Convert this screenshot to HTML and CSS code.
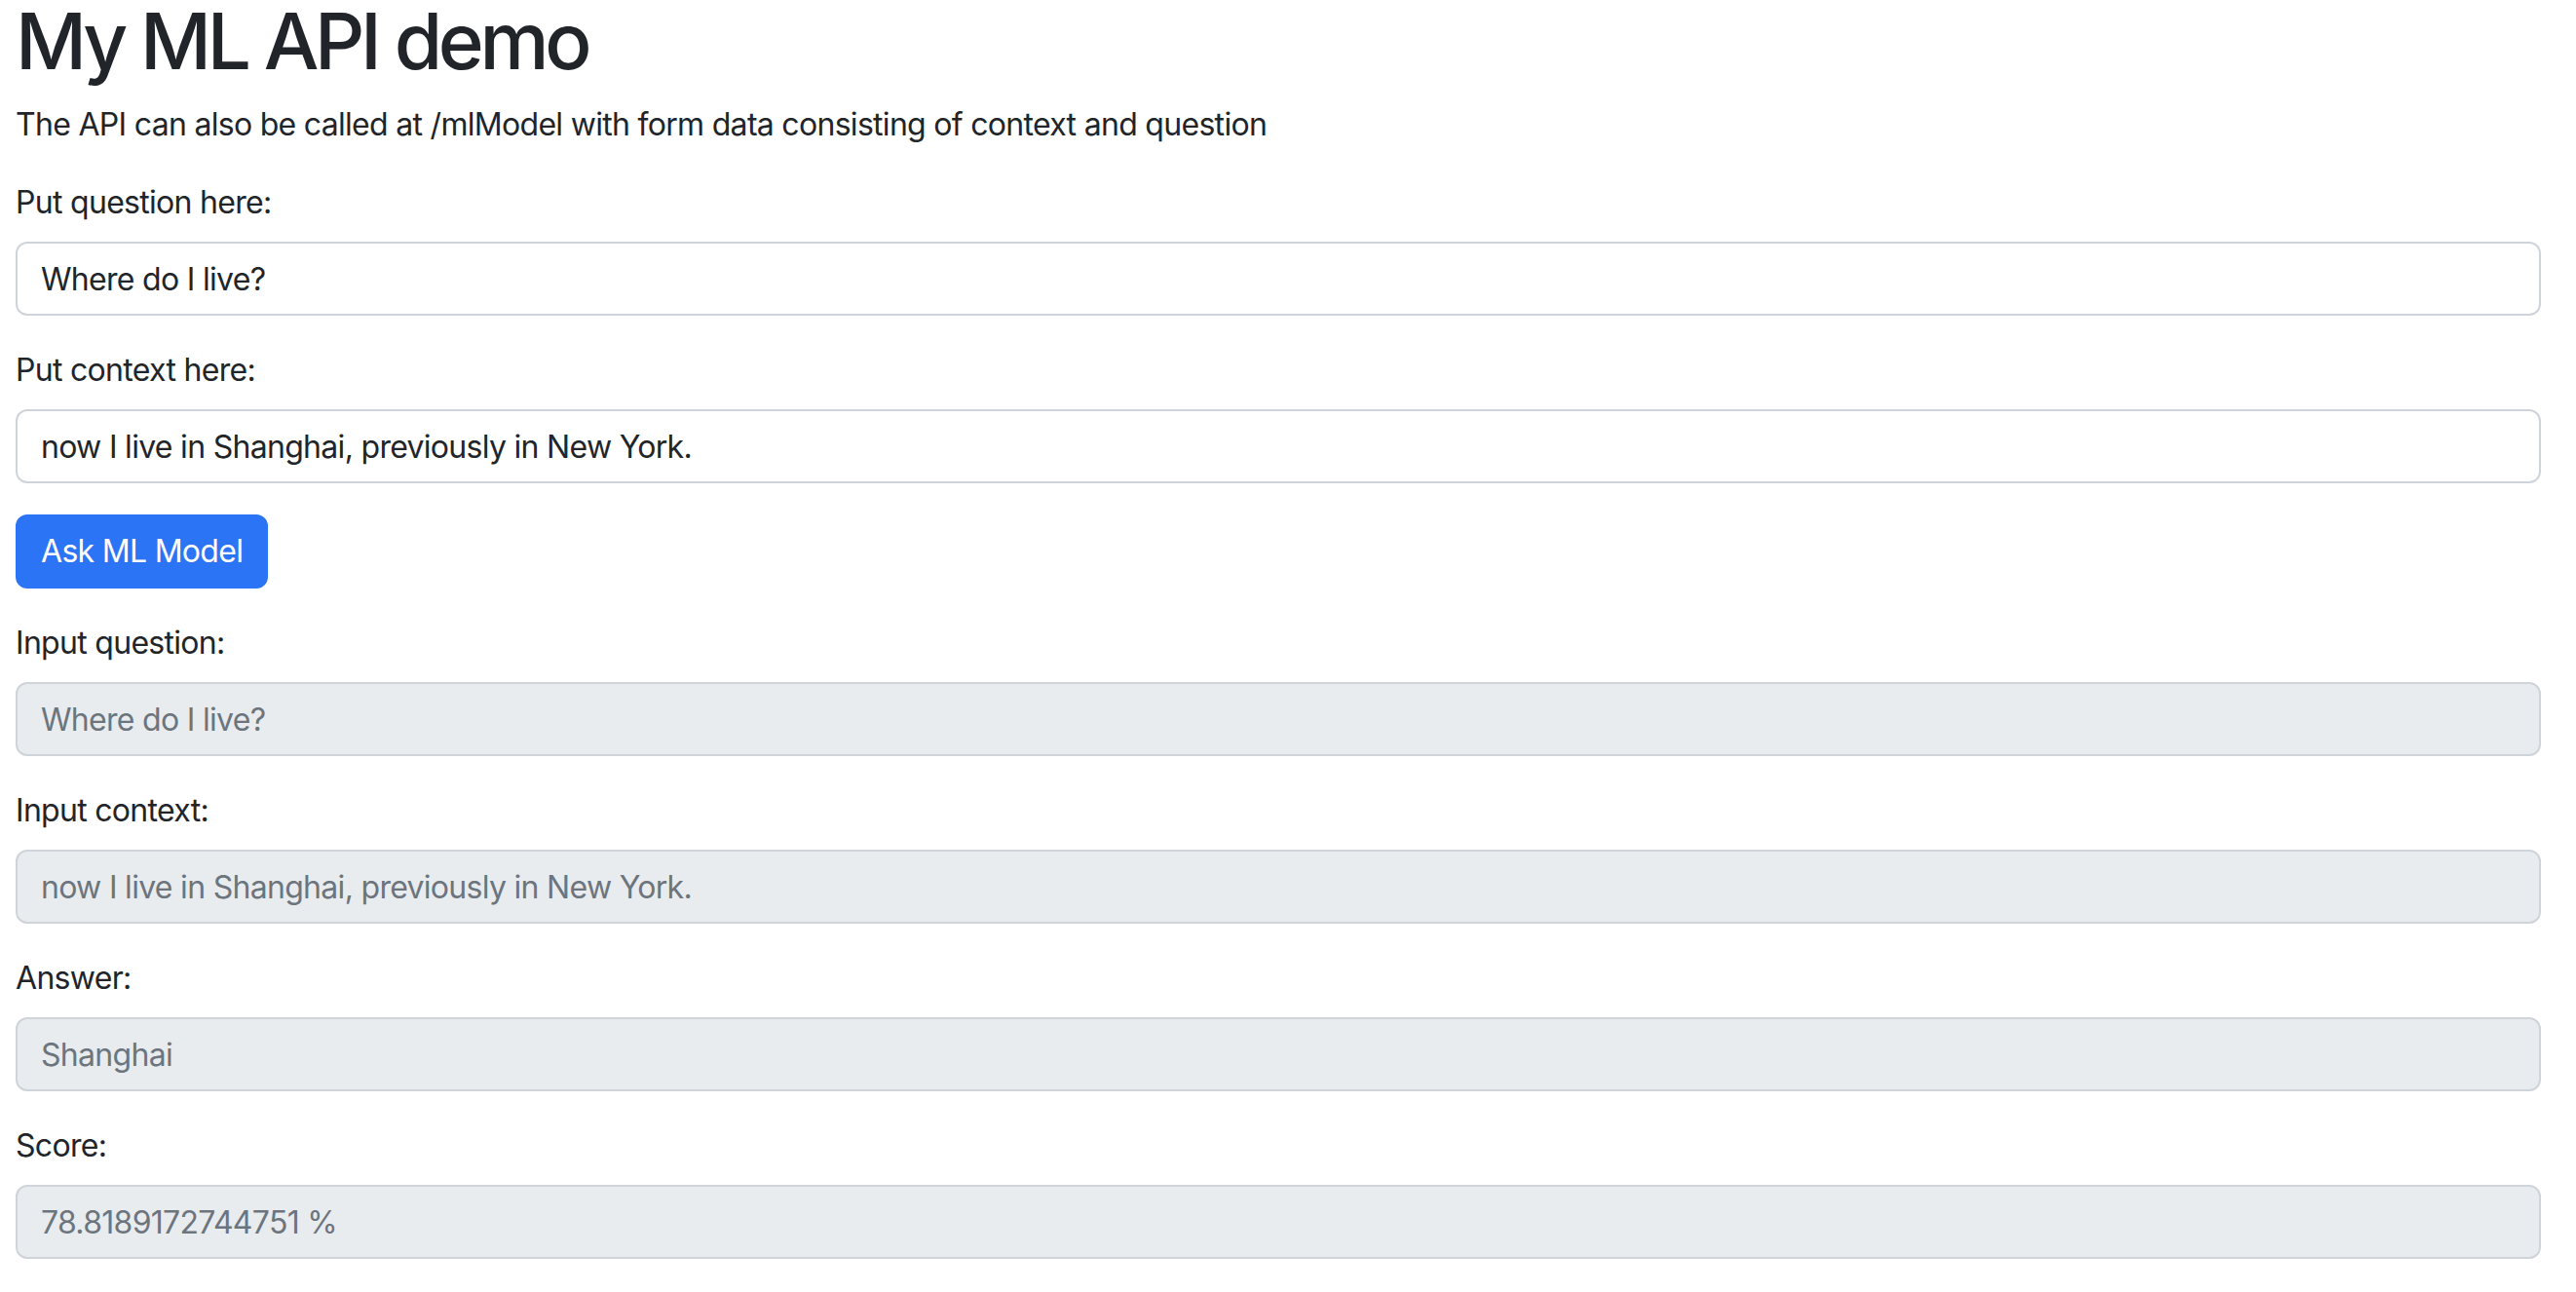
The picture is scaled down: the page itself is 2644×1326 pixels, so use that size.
FILE: index.html
```html
<!DOCTYPE html>
<html lang="en">
<head>
<meta charset="utf-8">
<title>My ML API demo</title>
<link rel="stylesheet" href="styles.css">
</head>
<body>
<main class="page">
  <h1 class="title">My ML API demo</h1>
  <p class="intro">The API can also be called at /mlModel with form data consisting of context and question</p>
  <form class="ask-form">
    <div class="field">
      <label class="field-label" for="question">Put question here:</label>
      <input class="field-input" id="question" type="text" value="Where do I live?">
    </div>
    <div class="field">
      <label class="field-label" for="context">Put context here:</label>
      <input class="field-input" id="context" type="text" value="now I live in Shanghai, previously in New York.">
    </div>
    <div class="field">
      <button class="btn-primary" type="button">Ask ML Model</button>
    </div>
  </form>
  <section class="results">
    <div class="field">
      <label class="field-label" for="in-q">Input question:</label>
      <input class="field-input field-input-disabled" id="in-q" type="text" value="Where do I live?" readonly>
    </div>
    <div class="field">
      <label class="field-label" for="in-c">Input context:</label>
      <input class="field-input field-input-disabled" id="in-c" type="text" value="now I live in Shanghai, previously in New York." readonly>
    </div>
    <div class="field">
      <label class="field-label" for="answer">Answer:</label>
      <input class="field-input field-input-disabled" id="answer" type="text" value="Shanghai" readonly>
    </div>
    <div class="field">
      <label class="field-label" for="score">Score:</label>
      <input class="field-input field-input-disabled" id="score" type="text" value="78.8189172744751 %" readonly>
    </div>
  </section>
</main>
</body>
</html>
```
FILE: styles.css
```css
* { box-sizing: border-box; }

html, body {
  margin: 0;
  padding: 0;
  background: #ffffff;
}

body {
  font-family: "Inter", "Liberation Sans", sans-serif;
  font-size: 32px;
  line-height: 1.5;
  letter-spacing: -0.7px;
  color: #212529;
  overflow: hidden;
}

.page {
  padding: 0 36px 0 16px;
}

.title {
  margin: 2px 0 22px;
  font-size: 80px;
  font-weight: 500;
  line-height: 80px;
  letter-spacing: -4.3px;
  color: #212529;
}

.intro {
  margin: 0 0 32px;
}

.ask-form {
  margin: 0;
}

.field {
  margin-bottom: 32px;
}

.field-label {
  display: block;
  margin-bottom: 16px;
  line-height: 48px;
}

.field-input {
  display: block;
  width: 100%;
  height: 76px;
  margin: 0;
  padding: 12px 24px;
  font-family: inherit;
  font-size: 32px;
  line-height: 48px;
  letter-spacing: -0.7px;
  color: #212529;
  background: #ffffff;
  border: 2px solid #ced4da;
  border-radius: 12px;
  outline: none;
}

.field-input-disabled {
  background: #e9ecef;
  color: #6c757d;
}

.btn-primary {
  display: inline-block;
  height: 76px;
  padding: 12px 24px;
  font-family: inherit;
  font-size: 32px;
  line-height: 48px;
  letter-spacing: -0.7px;
  color: #ffffff;
  background: #2b74f6;
  border: 2px solid #2b74f6;
  border-radius: 12px;
  cursor: pointer;
}
```
